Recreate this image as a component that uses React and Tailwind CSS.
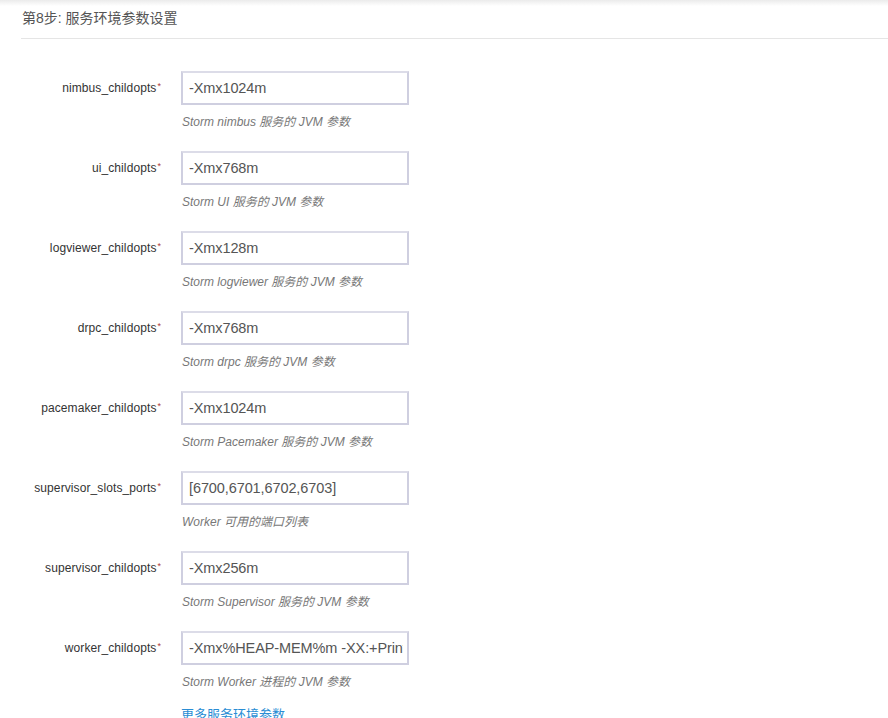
import React from "react";

const rows = [
  ["nimbus_childopts", "-Xmx1024m", "Storm nimbus 服务的 JVM 参数"],
  ["ui_childopts", "-Xmx768m", "Storm UI 服务的 JVM 参数"],
  ["logviewer_childopts", "-Xmx128m", "Storm logviewer 服务的 JVM 参数"],
  ["drpc_childopts", "-Xmx768m", "Storm drpc 服务的 JVM 参数"],
  ["pacemaker_childopts", "-Xmx1024m", "Storm Pacemaker 服务的 JVM 参数"],
  ["supervisor_slots_ports", "[6700,6701,6702,6703]", "Worker 可用的端口列表"],
  ["supervisor_childopts", "-Xmx256m", "Storm Supervisor 服务的 JVM 参数"],
  ["worker_childopts", "-Xmx%HEAP-MEM%m -XX:+PrintGCDetails -Xloggc:artifacts/gc.log", "Storm Worker 进程的 JVM 参数"],
];

export default function App() {
  return (
    <div
      className="relative w-[888px] h-[718px] overflow-hidden bg-white"
      style={{ fontFamily: '"Liberation Sans", Arial, "Noto Sans CJK SC", sans-serif' }}
    >
      <div className="absolute left-0 right-0 top-0 h-[6px] bg-gradient-to-b from-[#ebebeb] to-white" />
      <div className="relative pl-[21px]">
        <div className="pt-[8px] pb-[10px] border-b border-[#e5e5e5] text-[14px] leading-[20px] text-[#555] pl-[1px]">
          第8步: 服务环境参数设置
        </div>
      </div>
      <div className="pt-[32px] flex flex-col">
        {rows.map(([label, value, help]) => (
          <div key={label} className="flex h-[80px]">
            <div className="w-[166px] shrink-0 h-[33px] pt-[1px] flex items-center justify-end pr-[5px] text-[12px] text-[#333]">
              <span className="tracking-[0.1px]">{label}</span>
              <span className="text-[#b03a3a] text-[9px] relative -top-[1px] ml-[1px]">*</span>
            </div>
            <div className="ml-[15px] flex flex-col">
              <input
                readOnly
                value={value}
                className="w-[228px] h-[34px] border-2 border-[#cfcfe0] border-t-[#dcdce8] bg-white pl-[6px] pr-[4px] text-[14.5px] tracking-[-0.1px] text-[#555] outline-none"
                style={{ fontFamily: '"Liberation Sans", Arial, sans-serif' }}
              />
              <div className="mt-[9px] text-[12px] leading-[17px] italic text-[#777] pl-[1px]">{help}</div>
            </div>
          </div>
        ))}
        <div className="pl-[181px] -mt-[6px] text-[13px] text-[#2a8dd4]">更多服务环境参数</div>
      </div>
    </div>
  );
}
